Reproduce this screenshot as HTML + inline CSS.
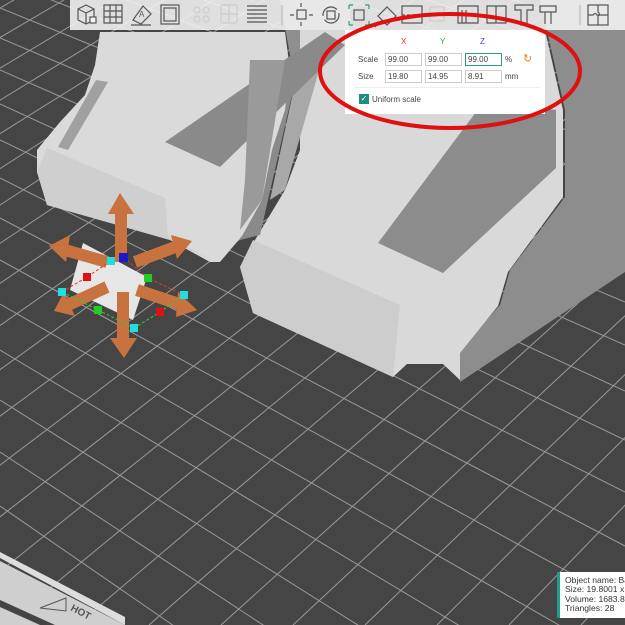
<!DOCTYPE html>
<html><head><meta charset="utf-8"><style>
html,body{margin:0;padding:0;width:625px;height:625px;overflow:hidden;}
body{position:relative;background:#444;font-family:"Liberation Sans",sans-serif;}
svg.scene{position:absolute;left:0;top:0;}
.tb{position:absolute;left:70px;top:0;width:555px;height:30px;background:rgba(245,245,245,0.88);}
.panel{position:absolute;left:345px;top:30px;width:200px;height:84px;background:#fff;font-size:8px;color:#444;}
.panel .ax{position:absolute;top:7px;font-size:8px;}
.panel .lb{position:absolute;left:13px;}
.panel .in{position:absolute;width:33px;height:11px;border:1px solid #ccc;font-size:8px;line-height:11px;padding-left:2px;box-sizing:content-box;}
.info{position:absolute;left:557px;top:572px;width:68px;height:46px;background:#fff;border-left:3px solid #1f9c8a;font-size:8.6px;line-height:9.4px;color:#333;padding:4px 0 0 5px;box-sizing:border-box;white-space:nowrap;overflow:hidden;}
</style></head><body>
<svg class="scene" width="625" height="625" viewBox="0 0 625 625" style="overflow:hidden">
<rect width="625" height="625" fill="#454545"/>
<g stroke="#9a9a9a" stroke-width="1">
<line x1="0" y1="350" x2="625" y2="725"/><line x1="0" y1="304" x2="625" y2="663"/><line x1="0" y1="260" x2="625" y2="603"/><line x1="0" y1="218" x2="625" y2="546"/><line x1="0" y1="178" x2="625" y2="492"/><line x1="0" y1="140" x2="625" y2="440"/><line x1="0" y1="104" x2="625" y2="391"/><line x1="0" y1="70" x2="625" y2="345"/><line x1="0" y1="38" x2="625" y2="302"/><line x1="0" y1="8" x2="625" y2="261"/><line x1="0" y1="-20" x2="625" y2="223"/><line x1="0" y1="-47" x2="625" y2="186"/><line x1="0" y1="-73" x2="625" y2="151"/><line x1="0" y1="-98" x2="625" y2="121"/><line x1="0" y1="-122" x2="625" y2="97"/><line x1="0" y1="-150" x2="625" y2="69"/><line x1="0" y1="-180" x2="625" y2="39"/><line x1="0" y1="-210" x2="625" y2="9"/>
<line x1="0" y1="400" x2="625" y2="793"/><line x1="0" y1="452" x2="625" y2="863"/><line x1="0" y1="506" x2="625" y2="937"/><line x1="0" y1="562" x2="625" y2="1013"/><line x1="0" y1="620" x2="625" y2="1091"/>
<line x1="-1219" y1="625" x2="-86" y2="0"/><line x1="-1147" y1="625" x2="-36" y2="0"/><line x1="-1075" y1="625" x2="14" y2="0"/><line x1="-1003" y1="625" x2="64" y2="0"/><line x1="-931" y1="625" x2="114" y2="0"/><line x1="-859" y1="625" x2="164" y2="0"/><line x1="-787" y1="625" x2="214" y2="0"/><line x1="-715" y1="625" x2="264" y2="0"/><line x1="-643" y1="625" x2="314" y2="0"/><line x1="-571" y1="625" x2="364" y2="0"/><line x1="-499" y1="625" x2="414" y2="0"/><line x1="-427" y1="625" x2="464" y2="0"/><line x1="-355" y1="625" x2="514" y2="0"/><line x1="-283" y1="625" x2="564" y2="0"/><line x1="-211" y1="625" x2="614" y2="0"/><line x1="-139" y1="625" x2="664" y2="0"/><line x1="-67" y1="625" x2="714" y2="0"/><line x1="5" y1="625" x2="764" y2="0"/><line x1="77" y1="625" x2="814" y2="0"/><line x1="149" y1="625" x2="864" y2="0"/><line x1="221" y1="625" x2="914" y2="0"/><line x1="293" y1="625" x2="964" y2="0"/><line x1="365" y1="625" x2="1014" y2="0"/><line x1="437" y1="625" x2="1064" y2="0"/><line x1="509" y1="625" x2="1114" y2="0"/><line x1="581" y1="625" x2="1164" y2="0"/><line x1="653" y1="625" x2="1214" y2="0"/>
</g>
<polygon points="280,0 350,0 350,110 300,110" fill="#8f8f8f"/>
<polygon points="540,0 625,0 625,272 460,382 460,350 500,305 510,270 565,197 565,110" fill="#8d8d8d"/>
<polygon points="300,30 545,30 563,110 563,197 508,272 498,306 460,353 460,380 443,364 407,364 393,377 253,313 240,267 255,240 285,190 300,150" fill="#d9d9d9"/>
<polygon points="253,240 400,305 393,377 253,313 240,267" fill="#cdcdcd"/>
<polygon points="378,243 443,273 556,168 556,110 485,100" fill="#8c8c8c"/>
<polygon points="280,60 300,60 260,235 240,240 255,200" fill="#8a8a8a"/>
<polygon points="300,60 322,60 285,190 270,200" fill="#a8a8a8"/>
<polygon points="100,32 285,32 290,70 285,110 272,150 262,200 242,236 220,262 210,262 170,240 47,205 37,172 37,150 60,122 85,95 95,65" fill="#dadada"/>
<polygon points="47,148 165,198 168,236 215,262 170,240 47,205 37,172" fill="#cfcfcf"/>
<polygon points="165,142 220,167 345,45 325,32" fill="#8a8a8a"/>
<polygon points="58,147 68,150 108,82 96,80" fill="#a0a0a0"/>
<polygon points="250,60 285,60 262,200 240,230 245,180" fill="#9a9a9a"/>
<polygon points="0,552 125,617 125,625 0,558" fill="#ddd"/>
<polygon points="0,561 125,625 0,625" fill="#cfcfcf"/>
<polygon points="0,600 0,607 40,625 55,625" fill="#444"/>
<polygon points="40,608 66,598 66,611" fill="none" stroke="#555" stroke-width="1"/>
<text x="70" y="610" font-size="10" fill="#555" font-weight="bold" transform="rotate(28 70 610)">HOT</text>
<polygon points="83,243 147,277 133,320 70,290" fill="#e6e6e6"/>
<g stroke="#c8733f" stroke-width="12" fill="none">
<line x1="121" y1="262" x2="121" y2="210"/>
<line x1="123" y1="292" x2="123" y2="345"/>
<line x1="107" y1="262" x2="65" y2="250"/>
<line x1="135" y1="262" x2="178" y2="246"/>
<line x1="107" y1="287" x2="68" y2="305"/>
<line x1="137" y1="290" x2="182" y2="305"/>
</g>
<g fill="#c8733f">
<polygon points="120,193 108,214 134,214"/>
<polygon points="124,358 110,338 137,338"/>
<polygon points="49,246 70,235 66,262"/>
<polygon points="192,241 171,235 177,259"/>
<polygon points="54,311 64,292 75,316"/>
<polygon points="197,310 178,292 176,317"/>
</g>
<g stroke-width="1" stroke-dasharray="3,2" fill="none">
<polyline points="62,292 87,277 111,261" stroke="#e33"/>
<polyline points="123,257 148,278 184,295" stroke="#e33"/>
<polyline points="62,292 98,310 134,328 160,312 184,295" stroke="#3c3"/>
</g>
<g>
<rect x="119" y="253" width="9" height="9" fill="#1a1acc"/>
<rect x="107" y="257" width="8" height="8" fill="#2dd"/>
<rect x="83" y="273" width="8" height="8" fill="#d11"/>
<rect x="144" y="274" width="8" height="8" fill="#2c2"/>
<rect x="58" y="288" width="8" height="8" fill="#2dd"/>
<rect x="180" y="291" width="8" height="8" fill="#2dd"/>
<rect x="94" y="306" width="8" height="8" fill="#2c2"/>
<rect x="156" y="308" width="8" height="8" fill="#d11"/>
<rect x="130" y="324" width="8" height="8" fill="#2dd"/>
</g>
</svg>
<div class="tb">
<svg width="555" height="30" viewBox="70 0 555 30" fill="none" stroke="#555" stroke-width="1.2">
<path d="M78 9 l8 -4 l8 4 v11 l-8 4 l-8 -4z M78 9 l8 4 l8 -4 M86 13 v11"/><rect x="90" y="17" width="6" height="6" fill="#f5f5f5"/>
<path d="M104 5 h18 v18 h-18z M104 11 h18 M104 17 h18 M110 5 v18 M116 5 v18"/>
<path d="M133 20 l10 -14 l8 8 l-10 10z M131 25 h20"/><text x="139" y="17" font-size="8" fill="#555" stroke="none">A</text>
<rect x="161" y="5" width="18" height="19"/><rect x="164" y="8" width="12" height="13"/>
<g stroke="#ccc"><circle cx="197" cy="10" r="3"/><circle cx="206" cy="10" r="3"/><circle cx="197" cy="19" r="3"/><circle cx="206" cy="19" r="3"/>
<rect x="221" y="5" width="16" height="18" rx="2"/><path d="M229 5 v18 M221 14 h16"/></g>
<path d="M247 6 h20 M247 10 h20 M247 14 h20 M247 18 h20 M247 22 h20"/>
<path d="M282 5 v20" stroke="#bbb"/>
<rect x="297" y="10" width="9" height="9"/><path d="M301 3 v4 M301 22 v4 M290 15 h4 M309 15 h4"/>
<circle cx="331" cy="15" r="8" stroke-dasharray="20 4"/><rect x="327" y="11" width="8" height="8"/>
<g stroke="#2a9d8a"><path d="M349 5 h4 M349 5 v4 M369 5 h-4 M369 5 v4 M349 25 h4 M349 25 v-4 M369 25 h-4 M369 25 v-4"/><rect x="354" y="10" width="10" height="10" stroke="#555"/></g>
<path d="M378 16 l9 -9 l9 9 l-9 9z M378 24 l-3 3"/>
<rect x="402" y="6" width="20" height="17"/><path d="M402 15 h20" stroke-dasharray="3 2"/>
<rect x="430" y="7" width="14" height="14" stroke="#ccc"/>
<path d="M458 6 h20 v17 h-20z M462 10 v13 M466 10 v13"/>
<path d="M487 6 h19 v17 h-19z M496 6 v17"/>
<path d="M515 5 h18 v5 h-6 v15 h-6 v-15 h-6z"/>
<path d="M540 6 h16 v6 h-16z M545 12 v12 M551 12 v12"/>
<path d="M580 5 v20" stroke="#bbb"/>
<rect x="588" y="5" width="20" height="20"/><path d="M598 5 v7 q3 2 0 4 v9 M588 15 h5 q2 -3 4 0 h11"/>
</svg>
</div>
<div class="panel">
<span class="ax" style="left:56px;color:#e33">X</span>
<span class="ax" style="left:95px;color:#3a3">Y</span>
<span class="ax" style="left:135px;color:#44c">Z</span>
<span class="lb" style="top:25px">Scale</span>
<div class="in" style="left:40px;top:23px">99.00</div>
<div class="in" style="left:80px;top:23px">99.00</div>
<div class="in" style="left:120px;top:23px;border-color:#2a9d8a">99.00</div>
<span style="position:absolute;left:160px;top:25px">%</span>
<span style="position:absolute;left:178px;top:22px;color:#f08020;font-size:11px">↻</span>
<span class="lb" style="top:42px">Size</span>
<div class="in" style="left:40px;top:40px">19.80</div>
<div class="in" style="left:80px;top:40px">14.95</div>
<div class="in" style="left:120px;top:40px">8.91</div>
<span style="position:absolute;left:160px;top:42px">mm</span>
<div style="position:absolute;left:10px;top:57px;width:185px;height:1px;background:#eee"></div>
<div style="position:absolute;left:14px;top:64px;width:10px;height:10px;background:#1f8c7c;color:#fff;font-size:8px;line-height:10px;text-align:center">✓</div>
<span style="position:absolute;left:27px;top:65px">Uniform scale</span>
</div>
<svg style="position:absolute;left:0;top:0" width="625" height="625"><ellipse cx="450" cy="71" rx="130" ry="57" fill="none" stroke="#e01010" stroke-width="4"/></svg>
<div class="info">Object name: Base<br>Size: 19.8001 x 14<br>Volume: 1683.88<br>Triangles: 28</div>
</body></html>
